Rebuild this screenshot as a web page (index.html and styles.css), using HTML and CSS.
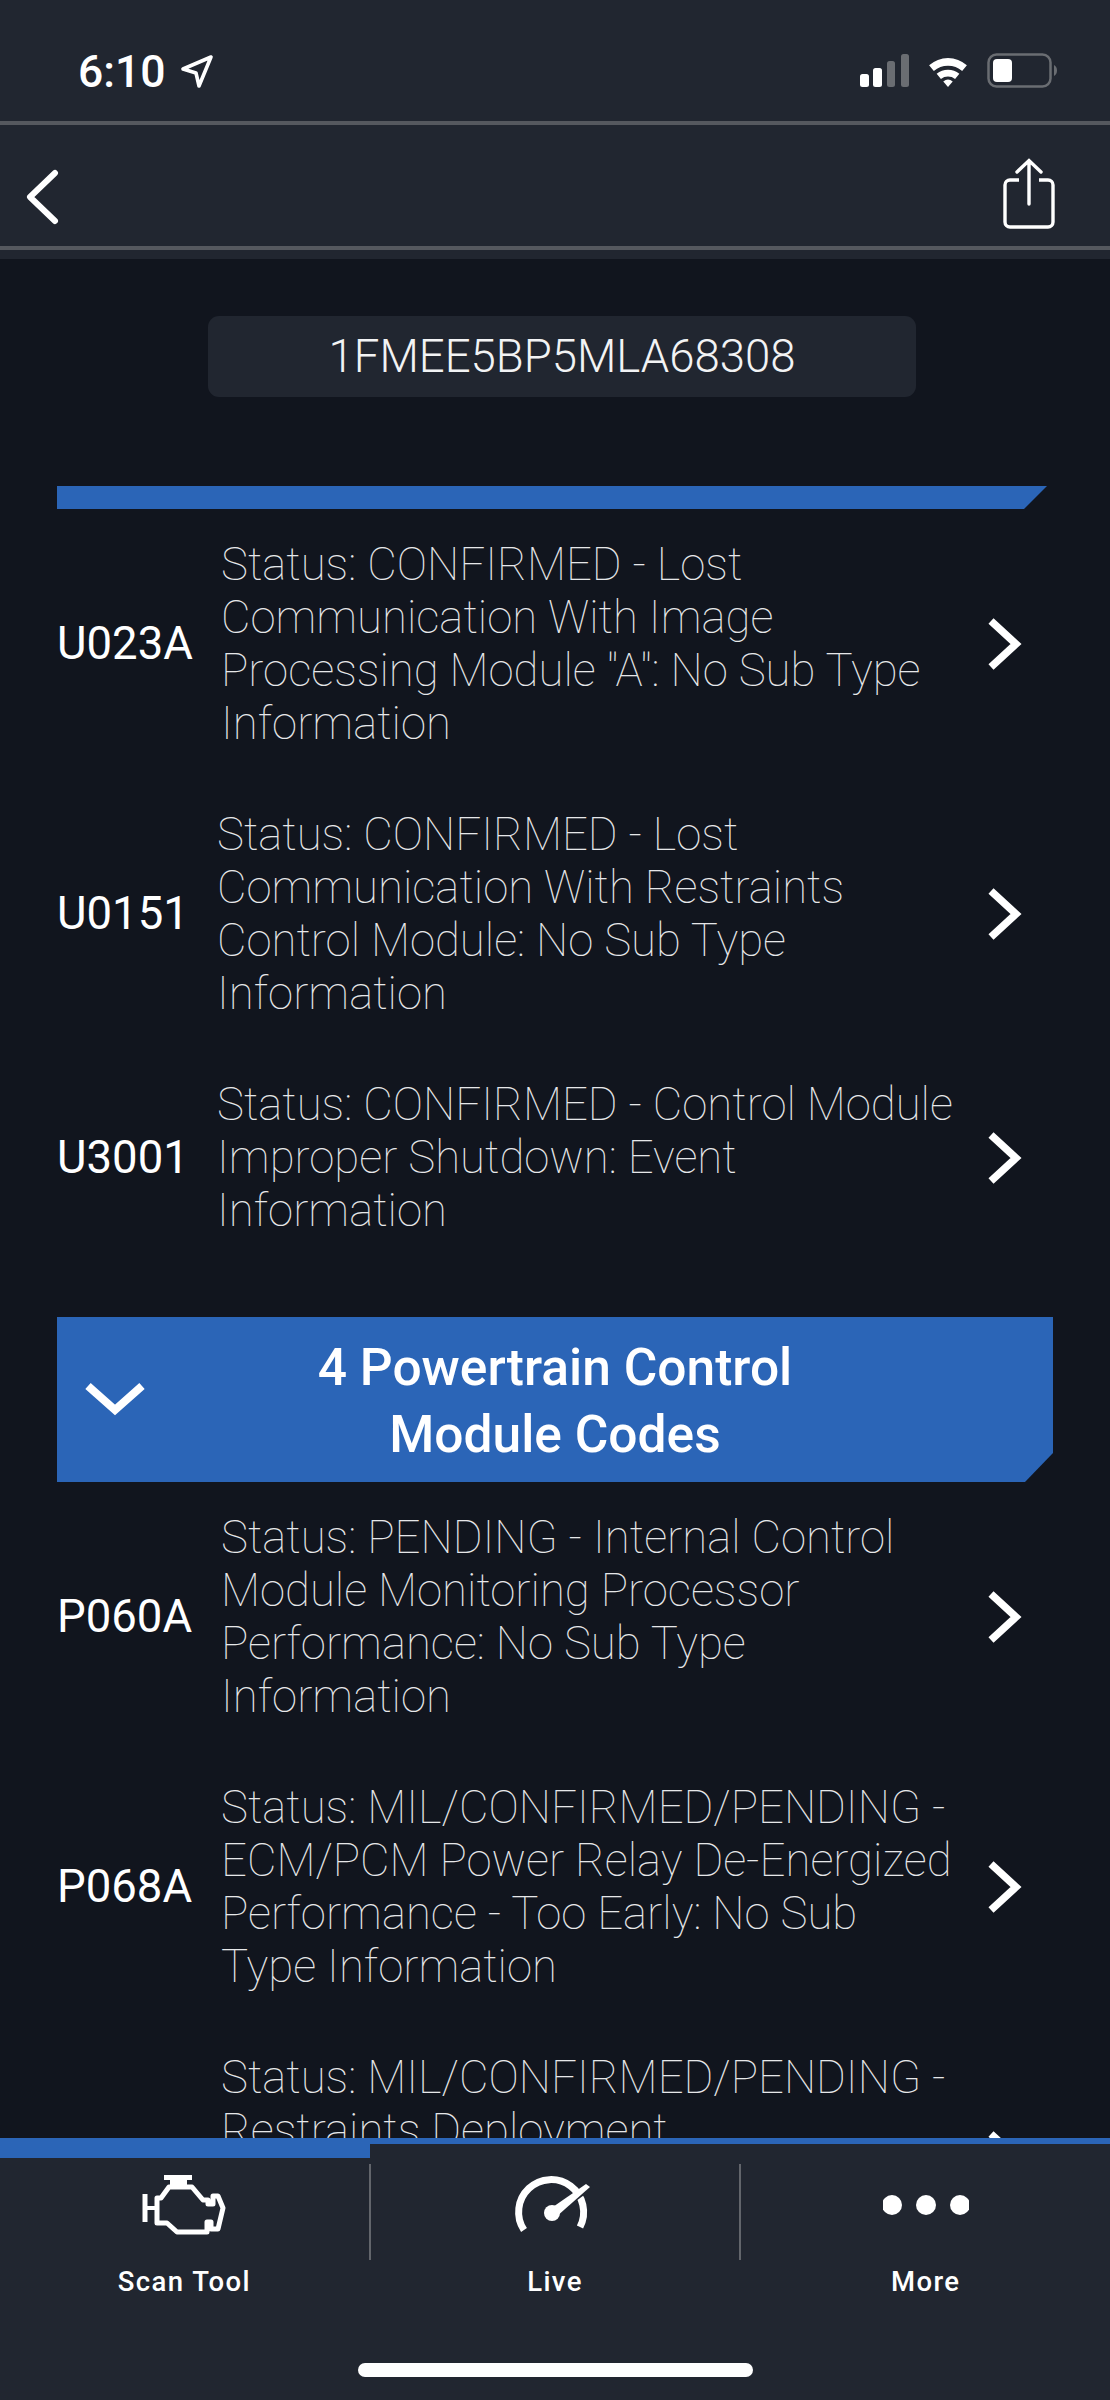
FILE: index.html
```html
<!DOCTYPE html>
<html lang="en">
  <head>
    <meta charset="UTF-8" />
    <meta name="viewport" content="width=device-width, initial-scale=1.0" />
    <title>Scan Tool Codes</title>
    <link rel="stylesheet" href="styles.css">
  </head>

  <body>
    <div class="screen">
      <header class="top">
        <div class="status-bar">
          <div class="clock">
            <span>6:10</span>
            <svg class="arrow" width="34" height="36" viewBox="0 0 34 36">
              <path d="M31 3 L3 15 L16 19 L19 32 Z" fill="none" stroke="#fff" stroke-width="3.6" stroke-linejoin="round" />
            </svg>
          </div>
          <div class="indicators">
            <svg width="49" height="33" viewBox="0 0 49 33">
              <rect x="0" y="20" width="9" height="13" rx="2.5" fill="#fff" />
              <rect x="13" y="14" width="9" height="19" rx="2.5" fill="#fff" />
              <rect x="27" y="7" width="8" height="26" rx="2.5" fill="#6a6d72" />
              <rect x="41" y="0" width="8" height="33" rx="2.5" fill="#6a6d72" />
            </svg>
            <svg width="46" height="34" viewBox="0 0 44 36">
              <path d="M2 12 A30 30 0 0 1 42 12 L37 18 A23 23 0 0 0 7 18 Z" fill="#fff" />
              <path d="M10 21 A19 19 0 0 1 34 21 L29.5 26.5 A12 12 0 0 0 14.500 26.500 Z" fill="#fff" />
              <path d="M17 29 A8 8 0 0 1 27 29 L22 35 Z" fill="#fff" />
            </svg>
            <svg width="71" height="35" viewBox="0 0 71 35">
              <rect x="1.500" y="1.500" width="62" height="32" rx="8" fill="none" stroke="#6a6d72" stroke-width="2.500" />
              <rect x="6" y="6" width="19" height="23" rx="4" fill="#fff" />
              <path d="M67 12 C71 14 71 21 67 23 Z" fill="#6a6d72" />
            </svg>
          </div>
        </div>
        <div class="nav-bar">
          <svg class="back" width="36" height="56" viewBox="0 0 36 56">
            <path d="M30 4 L5 28 L30 52" fill="none" stroke="#fff" stroke-width="6" stroke-linecap="round" stroke-linejoin="round" />
          </svg>
          <svg class="share" width="54" height="72" viewBox="0 0 54 72">
            <path d="M17 22 H8 A5 5 0 0 0 3 27 V64 A5 5 0 0 0 8 69 H46 A5 5 0 0 0 51 64 V27 A5 5 0 0 0 46 22 H37" fill="none" stroke="#fff" stroke-width="3.400" />
            <path d="M27 46 V3 M15 14 L27 2.500 L39 14" fill="none" stroke="#fff" stroke-width="3.400" stroke-linecap="round" />
          </svg>
        </div>
        <div class="nav-foot"></div>
      </header>

      <main class="content">
        <div class="vin">1FMEE5BP5MLA68308</div>

        <div class="band band-thin"></div>
        <a class="code-row pad-a">
          <span class="code">U023A</span>
          <span class="desc">Status: CONFIRMED - Lost<br>Communication With Image<br>Processing Module "A": No Sub Type<br>Information</span>
          <svg class="chevron" width="38" height="54" viewBox="0 0 38 54"><path d="M4 4 L29 27 L4 50" /></svg>
        </a>
        <a class="code-row pad-b">
          <span class="code">U0151</span>
          <span class="desc">Status: CONFIRMED - Lost<br>Communication With Restraints<br>Control Module: No Sub Type<br>Information</span>
          <svg class="chevron" width="38" height="54" viewBox="0 0 38 54"><path d="M4 4 L29 27 L4 50" /></svg>
        </a>
        <a class="code-row pad-b three">
          <span class="code">U3001</span>
          <span class="desc">Status: CONFIRMED - Control Module<br>Improper Shutdown: Event<br>Information</span>
          <svg class="chevron" width="38" height="54" viewBox="0 0 38 54"><path d="M4 4 L29 27 L4 50" /></svg>
        </a>

        <div class="band band-full">
          <svg class="band-arrow" width="60" height="38" viewBox="0 0 60 38"><path d="M3 5 L30 29 L57 5" /></svg>
          <div class="band-title">4 Powertrain Control<br>Module Codes</div>
        </div>
        <a class="code-row pad-a first">
          <span class="code">P060A</span>
          <span class="desc">Status: PENDING - Internal Control<br>Module Monitoring Processor<br>Performance: No Sub Type<br>Information</span>
          <svg class="chevron" width="38" height="54" viewBox="0 0 38 54"><path d="M4 4 L29 27 L4 50" /></svg>
        </a>
        <a class="code-row pad-a">
          <span class="code">P068A</span>
          <span class="desc">Status: MIL/CONFIRMED/PENDING -<br>ECM/PCM Power Relay De-Energized<br>Performance - Too Early: No Sub<br>Type Information</span>
          <svg class="chevron" width="38" height="54" viewBox="0 0 38 54"><path d="M4 4 L29 27 L4 50" /></svg>
        </a>
        <a class="code-row pad-a">
          <span class="code"></span>
          <span class="desc">Status: MIL/CONFIRMED/PENDING -<br>Restraints Deployment<br>Commanded: No Sub Type<br>Information</span>
          <svg class="chevron" width="38" height="54" viewBox="0 0 38 54"><path d="M4 4 L29 27 L4 50" /></svg>
        </a>
      </main>

      <footer class="tabs">
        <div class="tab-progress"></div>
        <div class="tab-row">
          <div class="tab">
            <svg class="tab-icon" width="86" height="66" viewBox="0 0 86 66">
              <rect x="23" y="3" width="28" height="5" fill="#fff" />
              <rect x="29" y="8" width="17" height="7" fill="#fff" />
              <path d="M16 26 H20 L28 15 H51 L62 28 H67 V32 H72 V24 H77 L82 36 L77 57 H70 V50 H66 V60 H36 L26 51 H16 Z" fill="none" stroke="#fff" stroke-width="5" stroke-linejoin="round" />
              <path d="M4 22 V50" fill="none" stroke="#fff" stroke-width="5" />
              <path d="M5 36 H16" fill="none" stroke="#fff" stroke-width="4" />
            </svg>
            <span>Scan Tool</span>
          </div>
          <div class="tab">
            <svg class="tab-icon" width="86" height="66" viewBox="0 0 86 66">
              <path d="M12 58 A32.500 32.500 0 1 1 68 55" fill="none" stroke="#fff" stroke-width="7" />
              <path d="M80 13 L50 35" fill="none" stroke="#212630" stroke-width="7" />
              <path d="M78 15 L74 12 L38 37 L44 45 Z" fill="#fff" />
              <circle cx="40" cy="41" r="8" fill="#fff" />
            </svg>
            <span>Live</span>
          </div>
          <div class="tab">
            <svg class="tab-icon" width="86" height="66" viewBox="0 0 86 66">
              <circle cx="9" cy="33" r="10" fill="#fff" />
              <circle cx="43" cy="33" r="10" fill="#fff" />
              <circle cx="77" cy="33" r="10" fill="#fff" />
            </svg>
            <span>More</span>
          </div>
        </div>
        <div class="home-bar"></div>
      </footer>
    </div>
  </body>
</html>
```

FILE: styles.css
```css
body {
  font-family: Roboto, "Liberation Sans", sans-serif;
  background-color: #11151e;
  color: #fff;
  margin: 0;
  padding: 0;
}

.screen {
  width: 1110px;
  height: 2400px;
  position: relative;
  overflow: hidden;
  background-color: #11151e;
}

.top {
  background-color: #212630;
}

.status-bar {
  height: 121px;
  padding: 0 52px 0 78px;
  display: flex;
  align-items: flex-start;
  justify-content: space-between;
  border-bottom: 4px solid #55585e;
}

.clock {
  display: flex;
  align-items: center;
  gap: 14px;
  margin-top: 51px;
  font-size: 44.5px;
  font-weight: 500;
  line-height: 42px;
}

.indicators {
  display: flex;
  align-items: center;
  gap: 16px;
  margin-top: 53px;
}

.nav-bar {
  height: 121px;
  padding: 0 54px 0 25px;
  display: flex;
  align-items: flex-start;
  justify-content: space-between;
  border-bottom: 4px solid #55585e;
}

.back {
  margin-top: 44px;
}

.share {
  margin-top: 33px;
}

.nav-foot {
  height: 9px;
}

.content {
  padding: 57px 57px 0;
}

.vin {
  width: 708px;
  height: 81px;
  margin: 0 0 89px 151px;
  background-color: #212630;
  border-radius: 11px;
  font-size: 45.5px;
  font-weight: 300;
  line-height: 81px;
  text-align: center;
  color: #f2f3f4;
}

.band {
  background-color: #2b65b7;
}

.band-thin {
  width: 990px;
  height: 23px;
  margin-bottom: 29px;
  clip-path: polygon(0 0, 100% 0, calc(100% - 23px) 100%, 0 100%);
}

.band-full {
  width: 996px;
  height: 165px;
  margin-top: 80px;
  position: relative;
  display: flex;
  align-items: center;
  justify-content: center;
  clip-path: polygon(0 0, 100% 0, 100% 136px, calc(100% - 28px) 100%, 0 100%);
}

.band-arrow {
  position: absolute;
  left: 28px;
  top: 64px;
  fill: none;
  stroke: #fff;
  stroke-width: 8px;
}

.band-title {
  font-size: 51.5px;
  font-weight: 500;
  line-height: 67px;
  text-align: center;
  margin-top: 2px;
}

.code-row {
  display: flex;
  align-items: center;
  min-height: 212px;
  margin-bottom: 58px;
}

.code-row.three {
  min-height: 159px;
  margin-bottom: 0;
}

.code-row.first {
  margin-top: 29px;
}

.code {
  font-size: 45.5px;
  line-height: 50px;
  flex: none;
}

.pad-a .code {
  width: 164px;
}

.pad-b .code {
  width: 160px;
}

.desc {
  flex: 1;
  font-size: 45.5px;
  font-weight: 100;
  line-height: 53px;
  color: #e6e7e9;
  white-space: nowrap;
}

.chevron {
  fill: none;
  stroke: #fff;
  stroke-width: 7.5px;
  flex: none;
  margin-right: 28px;
}

.tabs {
  position: absolute;
  left: 0;
  right: 0;
  bottom: 0;
  height: 262px;
  background-color: #212630;
}

.tab-progress {
  height: 6px;
  background-color: #2b65b7;
  position: relative;
}

.tab-progress::before {
  content: "";
  position: absolute;
  left: 0;
  top: 0;
  width: 370px;
  height: 20px;
  background-color: #2b65b7;
}

.tab-row {
  display: flex;
  height: 146px;
  padding-top: 20px;
}

.tab {
  flex: 1;
  display: flex;
  flex-direction: column;
  align-items: center;
  border-right: 2px solid #62656b;
  height: 96px;
  position: relative;
}

.tab:last-child {
  border-right: 0;
}

.tab span {
  position: absolute;
  top: 102px;
  font-size: 27.5px;
  font-weight: 500;
  letter-spacing: 1.4px;
  line-height: 32px;
  white-space: nowrap;
}

.tab-icon {
  margin-top: 8px;
}

.home-bar {
  position: absolute;
  left: 358px;
  bottom: 23px;
  width: 395px;
  height: 14px;
  border-radius: 7px;
  background-color: #fff;
}
```
